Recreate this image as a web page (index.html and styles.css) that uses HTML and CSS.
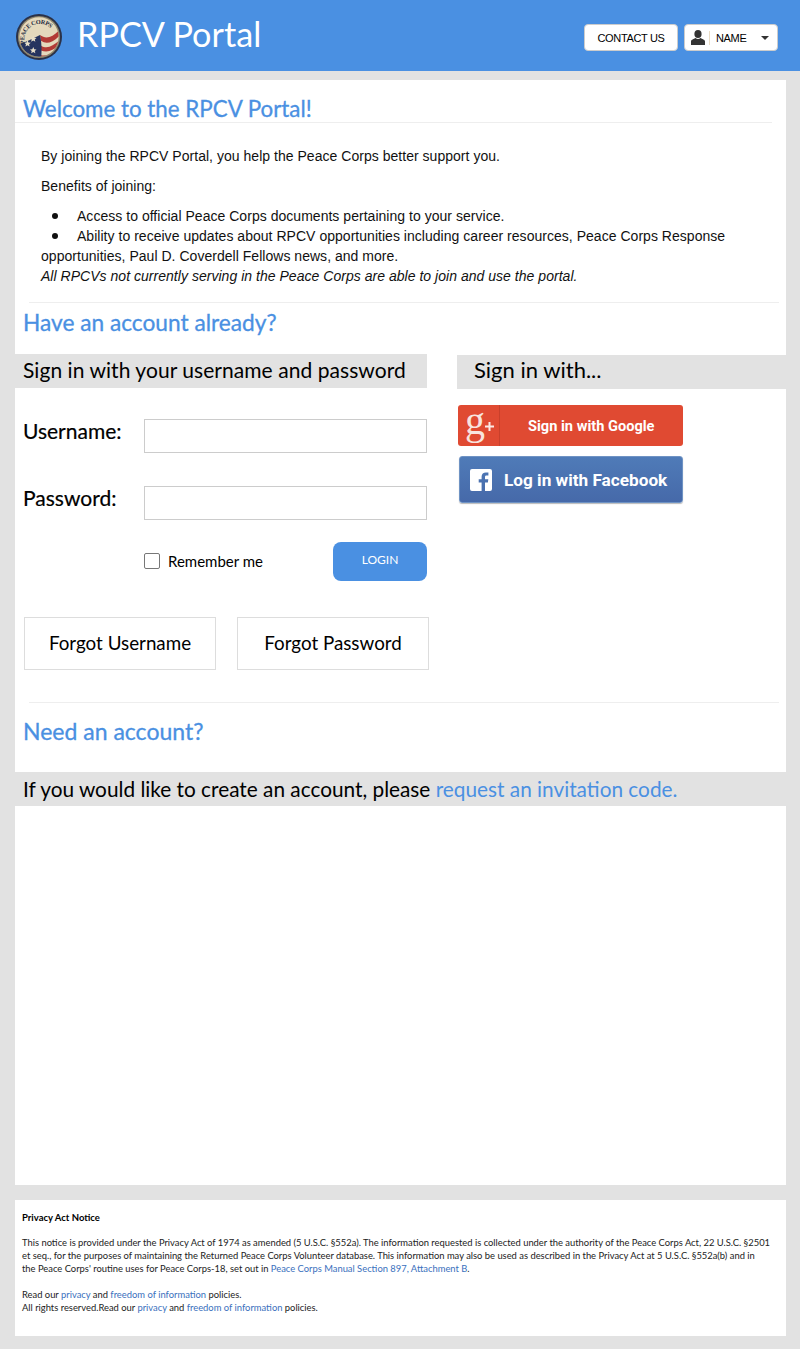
FILE: index.html
```html
<!DOCTYPE html>
<html lang="en">
<head>
<meta charset="utf-8">
<title>RPCV Portal</title>
<link rel="stylesheet" href="styles.css">
</head>
<body>
<header class="topbar">
  <div class="brand">
    <svg class="logo" width="46" height="46" viewBox="0 0 48 48">
      <defs>
        <clipPath id="disc"><circle cx="24" cy="24" r="20.500"/></clipPath>
        <path id="arc" d="M9.500 31 A16 16 0 0 1 39.500 20"/>
      </defs>
      <circle cx="24" cy="24" r="24" fill="#2a3148"/>
      <circle cx="24" cy="24" r="22" fill="#8f866c"/>
      <circle cx="24" cy="24" r="20.500" fill="#e4d9bd"/>
      <g clip-path="url(#disc)">
        <path d="M25 22 C32 27 38 24 46 16 L46 22 C38 30 32 32 26 28Z" fill="#b23a36"/>
        <path d="M26 33 C33 37 39 33 46 27 L46 32 C39 38 33 41 26 38Z" fill="#b23a36"/>
        <path d="M26 43 C33 44 39 41 46 36 L46 48 L26 48Z" fill="#a83634"/>
        <path d="M0 33 C8 30 16 27 25 22 C27 30 27 40 26 48 L0 48Z" fill="#26345f"/>
      </g>
      <path d="M18 22.500l1 2.300 2.400.2-1.800 1.600.6 2.400-2.200-1.300-2.200 1.300.6-2.400-1.800-1.600 2.400-.2z" fill="#e8dfc8"/>
      <path d="M12 27.500l1 2.300 2.400.2-1.800 1.600.6 2.400-2.200-1.300-2.200 1.300.6-2.400-1.800-1.600 2.400-.2z" fill="#e8dfc8"/>
      <path d="M18 34.500l1 2.300 2.400.2-1.800 1.600.6 2.400-2.200-1.300-2.200 1.300.6-2.400-1.800-1.600 2.400-.2z" fill="#e8dfc8"/>
      <text class="logo-text"><textPath href="#arc" textLength="42" lengthAdjust="spacing">PEACE CORPS</textPath></text>
    </svg>
    <span class="brand-name">RPCV Portal</span>
  </div>
  <div class="top-actions">
    <a class="top-btn contact">CONTACT US</a>
    <a class="top-btn name">
      <svg class="user" width="14" height="15" viewBox="0 0 14 15"><ellipse cx="7" cy="4" rx="3.600" ry="4" fill="#333"/><path d="M0 15 L0 11.500 C0 9.500 3 9 4.500 8 C6 9.200 8 9.200 9.500 8 C11 9 14 9.500 14 11.500 L14 15Z" fill="#333"/></svg>
      <span class="sep"></span>
      <span>NAME</span>
      <span class="caret"></span>
    </a>
  </div>
</header>
<main class="content">
  <section class="card welcome">
    <h2 class="heading underlined">Welcome to the RPCV Portal!</h2>
    <div class="intro">
      <p>By joining the RPCV Portal, you help the Peace Corps better support you.</p>
      <p>Benefits of joining:</p>
      <ul>
        <li>Access to official Peace Corps documents pertaining to your service.</li>
        <li>Ability to receive updates about RPCV opportunities including career resources, Peace Corps Response opportunities, Paul D. Coverdell Fellows news, and more.</li>
      </ul>
      <em>All RPCVs not currently serving in the Peace Corps are able to join and use the portal.</em>
    </div>
    <hr class="rule">
    <h2 class="heading have">Have an account already?</h2>
    <div class="signin">
      <div class="col-left">
        <h3 class="band">Sign in with your username and password</h3>
        <div class="field"><label>Username:</label><input type="text"></div>
        <div class="field"><label>Password:</label><input type="password"></div>
        <div class="login-row">
          <label class="remember"><span class="check"></span>Remember me</label>
          <a class="login">LOGIN</a>
        </div>
        <div class="forgot">
          <a>Forgot Username</a>
          <a>Forgot Password</a>
        </div>
      </div>
      <div class="col-right">
        <h3 class="band">Sign in with...</h3>
        <a class="social google">
          <span class="g-icon"><span class="g-letter">g</span><svg class="g-plus" width="9" height="9" viewBox="0 0 9 9"><path d="M3.500 0h2v3.500H9v2H5.500V9h-2V5.500H0v-2h3.500z" fill="#fbe9e5"/></svg></span>
          <span class="g-label">Sign in with Google</span>
        </a>
        <a class="social facebook">
          <svg class="f-icon" width="22" height="22" viewBox="0 0 22 22"><path d="M2 0h18a2 2 0 0 1 2 2v18a2 2 0 0 1-2 2h-5v-8.500h2.900l.4-3.300H15V8.100c0-1 .3-1.600 1.700-1.600h1.700V3.600c-.3 0-1.300-.1-2.500-.1-2.500 0-4.300 1.500-4.300 4.300v2.400H8.700v3.300h2.900V22H2a2 2 0 0 1-2-2V2a2 2 0 0 1 2-2z" fill="#fff"/></svg>
          <span class="f-label">Log in with Facebook</span>
        </a>
      </div>
    </div>
    <hr class="rule lower">
    <h2 class="heading need">Need an account?</h2>
    <div class="band invite">If you would like to create an account, please <a>request an invitation code.</a></div>
    <div class="blank"></div>
  </section>
  <footer class="card notice">
    <p class="notice-title">Privacy Act Notice</p>
    <p>This notice is provided under the Privacy Act of 1974 as amended (5 U.S.C. §552a). The information requested is collected under the authority of the Peace Corps Act, 22 U.S.C. §2501 et seq., for the purposes of maintaining the Returned Peace Corps Volunteer database. This information may also be used as described in the Privacy Act at 5 U.S.C. §552a(b) and in the Peace Corps' routine uses for Peace Corps-18, set out in <a>Peace Corps Manual Section 897, Attachment B</a>.</p>
    <p>Read our <a>privacy</a> and <a>freedom of information</a> policies.<br>All rights reserved.Read our <a>privacy</a> and <a>freedom of information</a> policies.</p>
  </footer>
</main>
</body>
</html>
```
FILE: styles.css
```css
* { box-sizing: border-box; }
html, body { margin: 0; padding: 0; }
body { background: #e2e2e2; font-family: Lato, "Open Sans", sans-serif; color: #000; width: 800px; height: 1349px; overflow: hidden; }
.topbar { height: 71px; background: #4a90e2; display: flex; justify-content: space-between; align-items: center; padding: 0 22px 0 16px; }
.brand { display: flex; align-items: center; gap: 15px; }
.logo { display: block; margin-top: 3px; }
.logo-text { font: 700 6.500px "Liberation Serif", serif; fill: #232a40; }
.brand-name { font-size: 34.200px; color: #fff; font-weight: 400; margin-top: -5px; }
.top-actions { display: flex; gap: 6px; margin-top: 4px; }
.top-btn { height: 27px; background: #fff; border: 1px solid #ccc; border-radius: 4px; font: 11px "Liberation Sans", sans-serif; letter-spacing: -.35px; color: #000; display: flex; align-items: center; }
.contact { width: 94px; justify-content: center; }
.name { width: 94px; padding-left: 6px; }
.sep { width: 1px; height: 14px; background: #eadcc4; margin: 0 6px 0 4px; }
.caret { width: 0; height: 0; border: 4px solid transparent; border-top-color: #333; border-bottom: 0; margin-left: 15px; }
.content { padding: 9px 14px 0 15px; }
.card { background: #fff; }
.welcome { height: 1105px; padding-top: 1px; }
.heading { color: #4a90e2; font-size: 22.350px; font-weight: 400; margin: 0; padding-left: 8px; -webkit-text-stroke: .3px #4a90e2; line-height: 30px; }
.underlined { margin: 13px 14px 0 0; border-bottom: 1px solid #eee; height: 29px; line-height: 30px; }
.have { margin-top: 5px; font-size: 22.700px; }
.intro { padding: 23px 26px 0; font: 14px/20px "Liberation Sans", sans-serif; letter-spacing: .03px; height: 179px; color: #111; }
.intro p { margin: 0 0 10px; }
.intro ul { margin: 0; padding: 0; list-style: none; }
.intro li::before { content: ""; display: inline-block; width: 6px; height: 6px; border-radius: 50%; background: #111; margin: 0 19px 2px 11px; vertical-align: middle; }
.rule { border: 0; border-top: 1px solid #eee; margin: 0 7px 0 14px; }
.signin { display: flex; margin-top: 17px; }
.col-left { width: 412px; }
.col-right { margin-left: 30px; width: 329px; }
.band { background: #e2e2e2; font-size: 22px; font-weight: 400; height: 34px; line-height: 30px; margin: 0; padding-left: 8px; }
.col-left .band { font-size: 21px; letter-spacing: .05px; margin-top: -1px; line-height: 32px; }
.col-right .band { padding-left: 17px; }
.field { display: flex; align-items: center; justify-content: space-between; font-size: 21px; height: 34px; }
.band + .field { margin-top: 31px; }
.field input { width: 283px; height: 34px; border: 1px solid #ccc; background: #fff; }
.field label { padding: 0 0 10px 8px; line-height: 14px; -webkit-text-stroke: .2px #000; }
.field + .field { margin-top: 33px; }
.login-row { display: flex; justify-content: space-between; align-items: center; margin: 22px 0 0 129px; }
.remember { font-size: 15px; display: flex; align-items: center; gap: 8px; padding-bottom: 2px; }
.check { width: 16px; height: 16px; border: 1px solid #777; border-radius: 2px; background: #fff; }
.login { width: 94px; height: 39px; background: #4a90e2; border-radius: 8px; color: #fff; font-size: 12px; display: flex; align-items: center; justify-content: center; padding-bottom: 4px; }
.forgot { display: flex; gap: 21px; margin: 36px 0 0 9px; width: 405px; }
.forgot a { flex: none; width: 192px; height: 53px; border: 1px solid #ddd; display: flex; align-items: center; justify-content: center; font-size: 18.800px; padding-bottom: 3px; }
.social { display: flex; align-items: center; color: #fff; font-family: Roboto, sans-serif; font-weight: 700; border-radius: 3px; }
.google { width: 225px; height: 41px; background: #e04a32; margin: 16px 0 0 1px; font-size: 14.600px; }
.g-icon { flex: none; width: 42px; height: 41px; border-right: 1px solid #c9402b; display: flex; align-items: center; justify-content: flex-start; padding-left: 7px; }
.g-letter { font: 400 40px/41px "Liberation Serif", serif; color: #f8e4df; margin-top: -11px; }
.g-plus { margin-top: 1px; }
.g-label { margin-left: 28px; white-space: nowrap; }
.facebook { width: 224px; height: 47px; background: linear-gradient(#4f7bb8, #4669a9); border: 1px solid #6f93c4; margin: 10px 0 0 2px; font-size: 17.200px; box-shadow: 0 1px 1px #bbb; }
.f-icon { flex: none; margin: 0 12px 0 10px; }
.f-label { white-space: nowrap; }
.lower { margin-top: 32px; }
.need { margin-top: 13px; font-size: 23px; }
.invite { margin-top: 26px; height: 34px; padding-left: 8px; font-size: 20.800px; line-height: 34px; }
.invite a { color: #4a90e2; }
.notice { margin-top: 15px; height: 136px; padding: 11px 16px 11px 7px; font: 9.400px/13px Lato, sans-serif; color: #222; }
.notice p { margin: 0 0 13px; }
.notice .notice-title { font-weight: 700; font-size: 9.500px; color: #000; margin-bottom: 12px; }
.notice a { color: #3a70bd; }
```
